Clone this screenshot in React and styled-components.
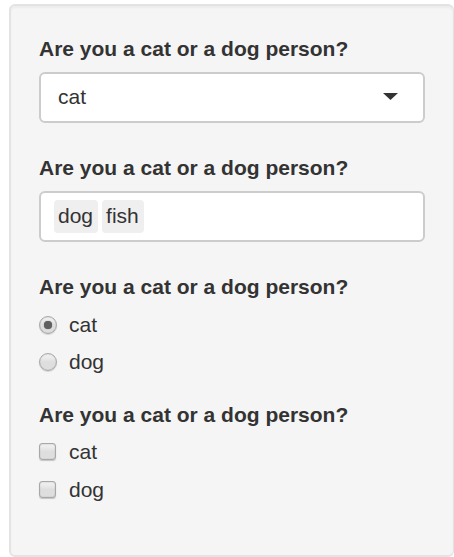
import React, { useState } from "react";
import styled, { createGlobalStyle, css } from "styled-components";

const GlobalStyle = createGlobalStyle`
  *, *::before, *::after { box-sizing: border-box; }
  body {
    margin: 0;
    background: #fff;
    color: #333;
    font: 21px/30px "Liberation Sans", Arial, sans-serif;
  }
`;

const Well = styled.form`
  display: flex;
  flex-direction: column;
  gap: 30px;
  margin: 4px 0 0 9px;
  padding: 28px 28px 50px;
  border: 2px solid #e3e3e3;
  border-right-width: 1px;
  border-radius: 6px;
  background: #f5f5f5;
  box-shadow: inset 0 2px 2px rgba(0, 0, 0, 0.04);
`;

const Field = styled.div`
  display: flex;
  flex-direction: column;
  gap: 8px;
`;

const questionText = css`
  padding: 0;
  font-weight: 700;
`;

const Label = styled.label`
  ${questionText}
`;

const Legend = styled.legend`
  ${questionText}
  margin-bottom: ${(p) => p.$space}px;
`;

const controlBox = css`
  width: 100%;
  height: 51px;
  border: 2px solid #ccc;
  border-radius: 6px;
  background: #fff;
`;

const SelectWrap = styled.div`
  position: relative;
`;

const Select = styled.select`
  ${controlBox}
  display: block;
  appearance: none;
  padding: 0 48px 2px 17px;
  color: inherit;
  font: inherit;
`;

const Caret = styled.svg`
  position: absolute;
  top: 21px;
  right: 27px;
  width: 15px;
  height: 7px;
  fill: #333;
  pointer-events: none;
`;

const TagBox = styled.div`
  ${controlBox}
  display: flex;
  align-items: center;
  gap: 4px;
  padding: 0 13px;
`;

const Tag = styled.span`
  height: 33px;
  padding: 0 5px 0 4px;
  border-radius: 4px;
  background: #efefef;
  line-height: 32px;
`;

const TagInput = styled.input`
  flex: 1;
  min-width: 0;
  padding: 0;
  border: 0;
  outline: 0;
  background: transparent;
  color: inherit;
  font: inherit;
`;

const Group = styled.fieldset`
  min-width: 0;
  margin: 0;
  padding: 0;
  border: 0;

  & + & { margin-top: -7px; }
`;

const Options = styled.div`
  display: flex;
  flex-direction: column;
  gap: ${(p) => p.$gap}px;
`;

const Option = styled.label`
  display: grid;
  grid-template-columns: 18px 1fr;
  align-items: center;
  column-gap: 12px;
`;

const toggle = css`
  appearance: none;
  display: grid;
  place-items: center;
  margin: 0;
  background: linear-gradient(#ededed 20%, #dedede 50%, #dedede);
`;

const Radio = styled.input.attrs({ type: "radio" })`
  ${toggle}
  width: 18px;
  height: 18px;
  border: 1px solid #a8a8a8;
  border-radius: 50%;
  box-shadow: 0 1px 1px rgba(0, 0, 0, 0.14), inset 0 0 1px rgba(0, 0, 0, 0.2);

  &:checked::before {
    content: "";
    width: 8px;
    height: 8px;
    border-radius: 50%;
    background: #606060;
    box-shadow: 0 0 1px #606060;
  }
`;

const Checkbox = styled.input.attrs({ type: "checkbox" })`
  ${toggle}
  width: 17px;
  height: 17px;
  margin-bottom: 2px;
  border: 1px solid #a8a8a8;
  border-radius: 3px;
  box-shadow: 0 1px 1px rgba(0, 0, 0, 0.2), inset 0 0 1px rgba(0, 0, 0, 0.4);

  &:checked::before {
    content: "";
    width: 9px;
    height: 9px;
    background: #606060;
  }
`;

const QUESTION = "Are you a cat or a dog person?";
const CHOICES = ["cat", "dog"];

export default function App() {
  const [selected, setSelected] = useState("cat");
  const [picked, setPicked] = useState("cat");
  const [tags] = useState(["dog", "fish"]);

  return (
    <>
      <GlobalStyle />
      <Well>
        <Field>
          <Label htmlFor="single">{QUESTION}</Label>
          <SelectWrap>
            <Select id="single" value={selected} onChange={(e) => setSelected(e.target.value)}>
              <option>cat</option>
              <option>dog</option>
              <option>fish</option>
            </Select>
            <Caret viewBox="0 0 15 7" aria-hidden="true">
              <path d="M0 0h15L7.5 7z" />
            </Caret>
          </SelectWrap>
        </Field>

        <Field>
          <Label htmlFor="multiple">{QUESTION}</Label>
          <TagBox>
            {tags.map((tag) => (
              <Tag key={tag}>{tag}</Tag>
            ))}
            <TagInput id="multiple" type="text" autoComplete="off" />
          </TagBox>
        </Field>

        <Group>
          <Legend $space={8}>{QUESTION}</Legend>
          <Options $gap={7}>
            {CHOICES.map((choice) => (
              <Option key={choice}>
                <Radio
                  name="radio"
                  value={choice}
                  checked={picked === choice}
                  onChange={() => setPicked(choice)}
                />
                {choice}
              </Option>
            ))}
          </Options>
        </Group>

        <Group>
          <Legend $space={7}>{QUESTION}</Legend>
          <Options $gap={8}>
            {CHOICES.map((choice) => (
              <Option key={choice}>
                <Checkbox name="checkbox" value={choice} />
                {choice}
              </Option>
            ))}
          </Options>
        </Group>
      </Well>
    </>
  );
}
